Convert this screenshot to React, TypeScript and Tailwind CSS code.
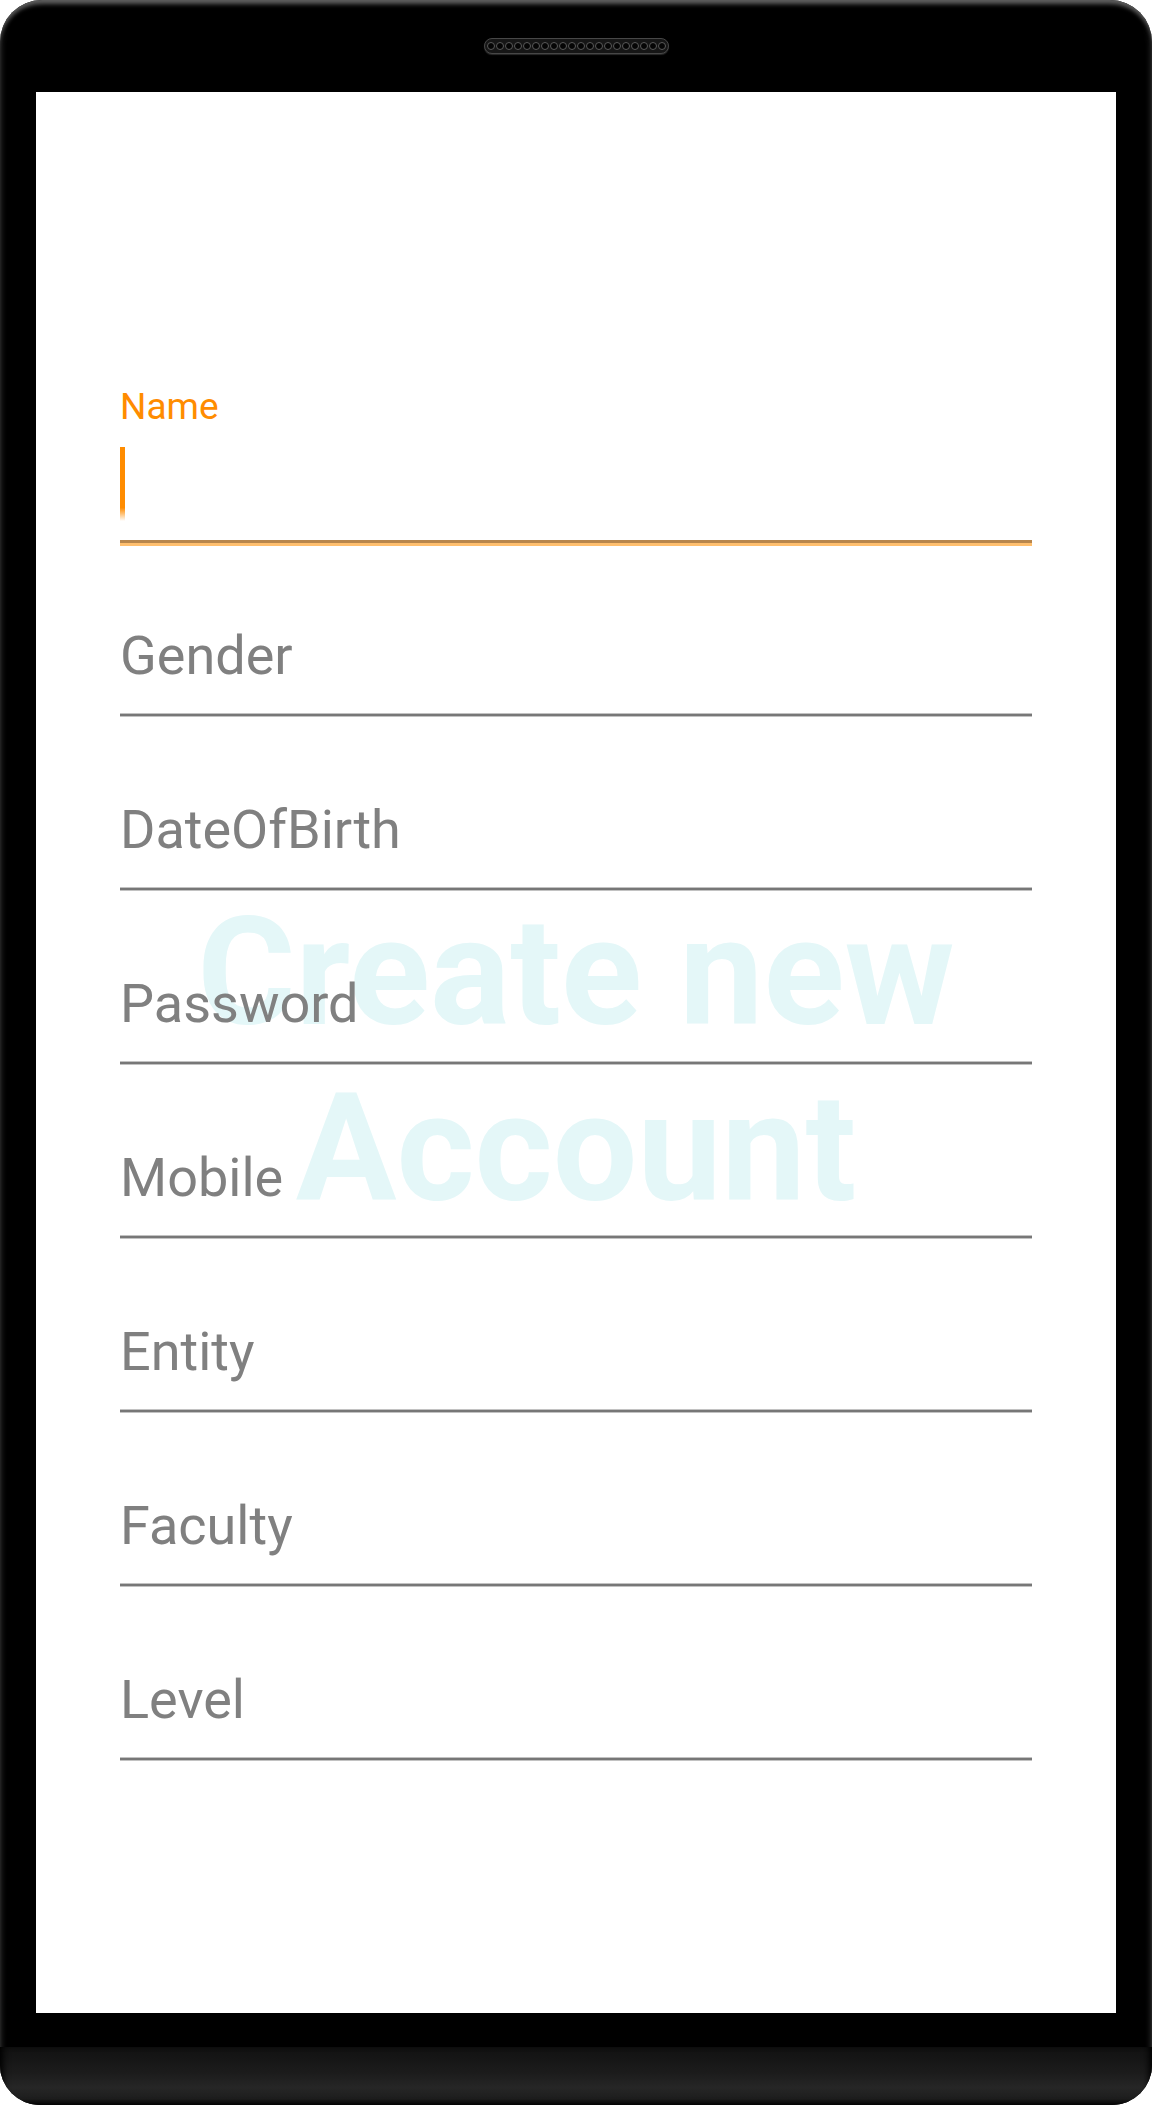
import React from "react";

const hints = ["Gender", "DateOfBirth", "Password", "Mobile", "Entity", "Faculty", "Level"];

function Speaker() {
  return (
    <div className="mx-auto flex h-[16px] w-[185px] items-center justify-center gap-[1px] rounded-full border border-[#474747] bg-[#161616] shadow-[0_1px_1px_#2a2a2a]">
      {Array.from({ length: 20 }).map((_, i) => (
        <span key={i} className="h-[8px] w-[8px] rounded-full border border-[#5a5a5a] bg-[#050505]" />
      ))}
    </div>
  );
}

function HintField({ label }: { label: string }) {
  return (
    <div className="flex h-[174px] shrink-0 flex-col">
      <div className="flex flex-1 items-end pb-[30px]">
        <span className="text-[54px] leading-none text-[#808080]">{label}</span>
      </div>
      <div className="h-[4px] shrink-0 border-y border-[#c2c2c2] bg-[#777777]" />
    </div>
  );
}

export default function App() {
  return (
    <div className="h-[2105px] w-[1152px] bg-white" style={{ fontFamily: "Roboto, 'Noto Sans', sans-serif" }}>
      <div className="flex h-full flex-col overflow-hidden rounded-t-[42px] rounded-b-[40px] bg-black shadow-[inset_0_6px_4px_-2px_#5e5e5e,inset_4px_0_6px_-3px_#2e2e2e,inset_-4px_0_6px_-3px_#2e2e2e]">
        {/* top bezel */}
        <div className="h-[92px] shrink-0 pt-[38px]">
          <Speaker />
        </div>

        {/* screen */}
        <div className="relative mx-[36px] h-[1921px] shrink-0 bg-white">
          <div className="absolute inset-0 flex items-center justify-center pt-[17px]">
            <p className="text-center text-[150px] font-bold leading-[176px] text-[#e4f7f8]">
              Create new
              <br />
              Account
            </p>
          </div>

          <div className="relative flex flex-col px-[84px] pt-[277px]">
            {/* focused Name field */}
            <div className="flex h-[174px] shrink-0 flex-col">
              <span className="mt-[19px] shrink-0 text-[37px] leading-none text-[#ff8c00]">Name</span>
              <span className="mt-[22px] h-[74px] w-[5px] shrink-0 bg-[linear-gradient(to_bottom,#ff8c00_82%,rgba(255,140,0,0))]" />
              <div className="mt-[19px] shrink-0">
                <div className="h-[3px] bg-[#b8864c]" />
                <div className="h-[3px] bg-[#ffbf6e]" />
              </div>
            </div>
            {hints.map((h) => (
              <HintField key={h} label={h} />
            ))}
          </div>
        </div>

        {/* bottom bezel */}
        <div className="h-[34px] shrink-0" />
        <div className="flex-1 bg-[linear-gradient(to_bottom,#111111,#1c1c1c_45%,#262626_70%,#181818)] shadow-[inset_7px_0_7px_-4px_#000,inset_-7px_0_7px_-4px_#000,inset_0_-5px_5px_-3px_#000]" />
      </div>
    </div>
  );
}
